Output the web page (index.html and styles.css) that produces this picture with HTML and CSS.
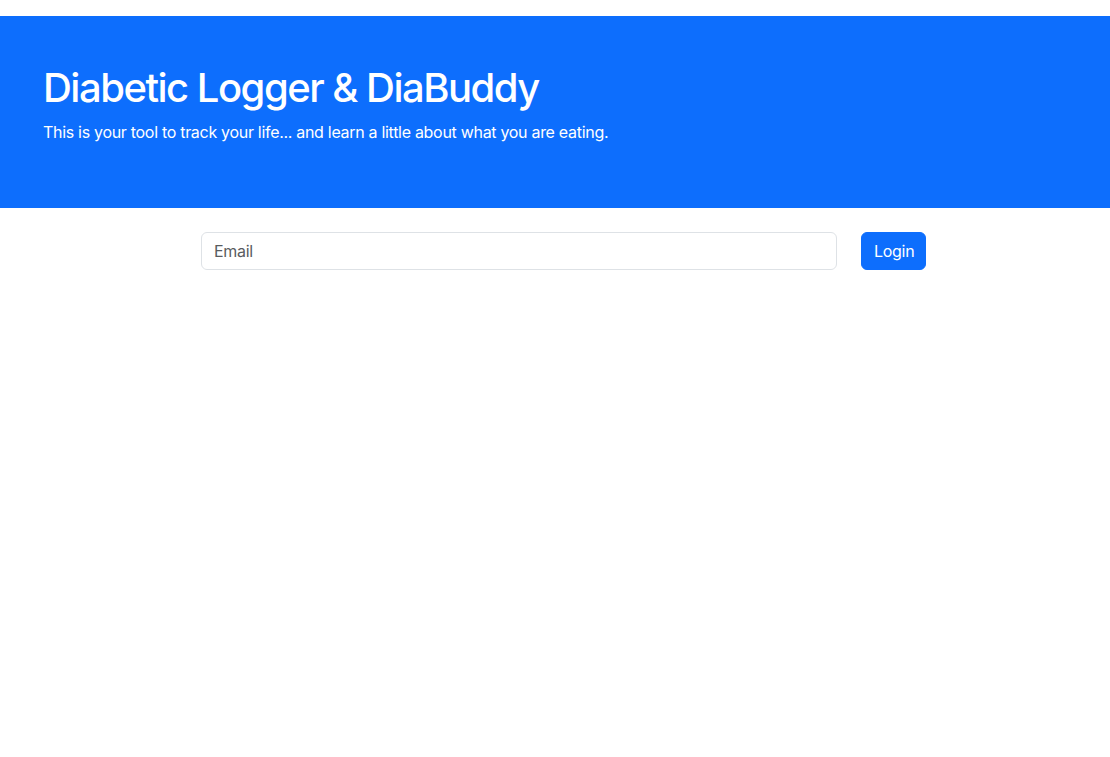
FILE: index.html
```html
<!DOCTYPE html>
<html lang="en">
<head>
<meta charset="utf-8">
<title>Diabetic Logger & DiaBuddy</title>
<link rel="stylesheet" href="styles.css">
</head>
<body>
<header class="hero">
  <h1 class="hero-title">Diabetic Logger &amp; DiaBuddy</h1>
  <p class="hero-lead">This is your tool to track your life... and learn a little about what you are eating.</p>
</header>
<main class="login">
  <form class="login-form">
    <input class="login-input" type="email" placeholder="Email">
    <button class="login-btn" type="button">Login</button>
  </form>
</main>
</body>
</html>
```
FILE: styles.css
```css
* { box-sizing: border-box; }
body {
  margin: 0;
  font-family: Inter, "Liberation Sans", sans-serif;
  color: #212529;
  background: #fff;
}
.hero {
  margin-top: 16px;
  height: 192px;
  background: #0d6efd;
  color: #fff;
  padding: 48px 43px;
}
.hero-title {
  margin: 0 0 8px;
  font-size: 40px;
  font-weight: 500;
  line-height: 1.2;
  letter-spacing: -1.5px;
}
.hero-lead {
  margin: 0;
  font-size: 16px;
  line-height: 1.5;
  letter-spacing: -0.3px;
}
.login {
  padding: 24px 0 0 201px;
}
.login-form {
  display: flex;
  gap: 24px;
  margin: 0;
}
.login-input {
  width: 636px;
  height: 38px;
  padding: 6px 12px;
  font: inherit;
  font-size: 16px;
  letter-spacing: -0.3px;
  color: #212529;
  border: 1px solid #dee2e6;
  border-radius: 6px;
  background: #fff;
}
.login-input::placeholder { color: #595c5f; }
.login-btn {
  width: 65px;
  height: 38px;
  padding: 6px 12px;
  font: inherit;
  font-size: 16px;
  letter-spacing: -0.3px;
  color: #fff;
  background: #0d6efd;
  border: 1px solid #0d6efd;
  border-radius: 6px;
}
```
